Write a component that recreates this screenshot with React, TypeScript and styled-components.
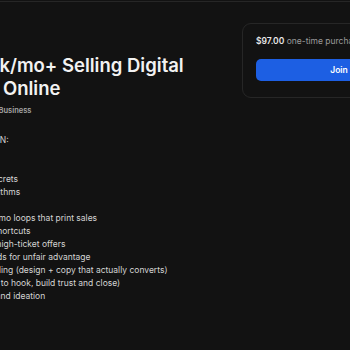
import React from 'react';
import styled, { createGlobalStyle } from 'styled-components';

const GlobalStyle = createGlobalStyle`
  html, body {
    margin: 0;
    padding: 0;
    background: #121212;
    overflow: hidden;
  }
  body {
    font-family: Inter, "Noto Sans", "Liberation Sans", sans-serif;
    color: #d4d4d4;
  }
`;

const TopBar = styled.div`
  height: 1px;
  border-bottom: 1px solid #262626;
`;

const Layout = styled.div`
  display: flex;
  align-items: flex-start;
  gap: 24px;
  margin-left: -82px;
  padding-top: 21px;
  width: 640px;
`;

const Main = styled.main`
  width: 300px;
  flex-shrink: 0;
  padding-top: 31px;
`;

const Title = styled.h1`
  margin: 0;
  font-size: 18.5px;
  line-height: 23px;
  font-weight: 600;
  color: #f2f2f2;
`;

const Meta = styled.div`
  margin-top: 5px;
  font-size: 7.5px;
  line-height: 11px;
  font-weight: 600;
  color: #a8a8a8;
`;

const Description = styled.div`
  margin-top: 18px;
  font-size: 8.5px;
  line-height: 13px;
  color: #d4d4d4;
  white-space: pre-line;
`;

const Card = styled.aside`
  width: 194px;
  flex-shrink: 0;
  border: 1px solid #262626;
  border-radius: 9px;
  padding: 11px 13px 16px;
  box-sizing: border-box;
`;

const Price = styled.div`
  font-size: 8.5px;
  line-height: 13px;
  color: #9a9a9a;

  strong {
    font-weight: 600;
    color: #e8e8e8;
  }
`;

const JoinButton = styled.button`
  margin-top: 11px;
  width: 100%;
  height: 22px;
  border: none;
  border-radius: 5px;
  background: #1d5fe3;
  color: #fff;
  font-family: inherit;
  font-size: 8.5px;
  font-weight: 600;
  cursor: pointer;
`;

const lessons = [
  "WHAT YOU'LL LEARN:",
  '',
  '',
  '- Organic growth secrets',
  '- Cracking the algorithms',
  '',
  '- Self-running $10k/mo loops that print sales',
  '- Workflow and AI shortcuts',
  '- Crafting premium high-ticket offers',
  '- Exploiting hot trends for unfair advantage',
  '- Landing page building (design + copy that actually converts)',
  '- Webinars (in order to hook, build trust and close)',
  '- Product research and ideation',
];

const App: React.FC = () => {
  return (
    <>
      <GlobalStyle />
      <TopBar />
      <Layout>
        <Main>
          <Title>Bank $10k/mo+ Selling Digital Products Online</Title>
          <Meta>By Alexander Carter • Business</Meta>
          <Description>{lessons.join('\n')}</Description>
        </Main>
        <Card>
          <Price>
            <strong>$97.00</strong> one-time purchase
          </Price>
          <JoinButton>Join</JoinButton>
        </Card>
      </Layout>
    </>
  );
};

export default App;
